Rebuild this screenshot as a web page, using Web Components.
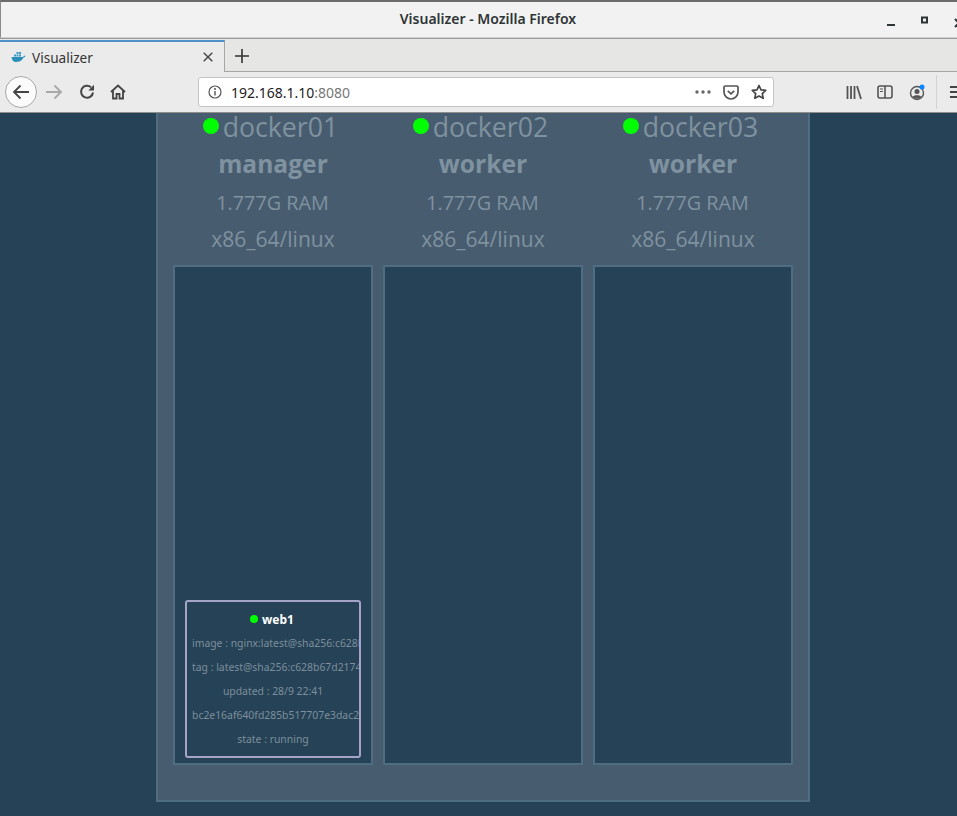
<!DOCTYPE html>
<html>
<head>
<meta charset="utf-8">
<title>Visualizer</title>
<style>
  html, body { margin: 0; padding: 0; height: 816px; overflow: hidden; background: #254256; }
  body { display: flex; flex-direction: column; font-family: "Open Sans", "Noto Sans", sans-serif; }
</style>
</head>
<body>
<fx-chrome></fx-chrome>
<swarm-page>
  <swarm-node name="docker01" role="manager">
    <swarm-task name="web1">
      <div>image : nginx:latest@sha256:c628b67d21744fce822</div>
      <div>tag : latest@sha256:c628b67d21744fce822</div>
      <div class="c">updated : 28/9 22:41</div>
      <div>bc2e16af640fd285b517707e3dac2dc</div>
      <div class="c">state : running</div>
    </swarm-task>
  </swarm-node>
  <swarm-node name="docker02" role="worker"></swarm-node>
  <swarm-node name="docker03" role="worker"></swarm-node>
</swarm-page>
<script>
class FxChrome extends HTMLElement {
    constructor() {
        super();
        this.attachShadow({ mode: "open" });
        this.shadowRoot.innerHTML = `
        <style>
            :host { display: block; height: 113px; flex: none; color: #333; font-family: "Noto Sans", sans-serif; overflow: hidden; }
            svg { display: block; flex: none; }
            .title {
                height: 38px; box-sizing: border-box; background: #f2f2f2;
                border-top: 2px solid #6b6b6b; border-left: 1px solid #8a8a8a; border-bottom: 1px solid #d0d0d0;
                display: flex; align-items: center; justify-content: center; position: relative;
                font-size: 14px; font-weight: 600; color: #2e3436; padding-bottom: 2px; padding-left: 18px;
            }
            .winbtns { position: absolute; top: 0; left: 885px; display: flex; }
            .tabs {
                height: 34px; box-sizing: border-box; background: #e6e6e5;
                border-top: 1px solid #9a9a9a; padding-top: 1px; display: flex;
            }
            .tab {
                width: 225px; height: 32px; box-sizing: border-box; background: #ebebeb;
                border-top: 2px solid #4f8fcb; border-right: 1px solid #a6a6a6;
                display: flex; align-items: center; padding-left: 11px; font-size: 13.6px; color: #333;
            }
            .tab span { margin-left: 6px; flex: 1; }
            .tab .x { margin-right: 11px; }
            .rest { flex: 1; display: flex; border-bottom: 1px solid #a6a6a6; }
            .plus { width: 34px; display: flex; align-items: center; justify-content: center; }
            .nav {
                height: 41px; box-sizing: border-box; background: #ebebeb; border-bottom: 1px solid #8e8e8e;
                display: flex; align-items: center; position: relative; padding-left: 5px;
            }
            .back {
                flex: none; width: 32px; height: 32px; box-sizing: border-box; border: 1px solid #a8a8a8; border-radius: 50%;
                background: #fbfbfb; display: flex; align-items: center; justify-content: center;
            }
            .url {
                flex: none; width: 576px; height: 30px; box-sizing: border-box; margin-left: 72px; background: #fff;
                border: 1px solid #c4c4c4; border-radius: 3px; display: flex; align-items: center;
                padding-left: 9px; font-size: 14px; color: #222;
            }
            .url b { font-weight: 400; margin-left: 9px; flex: 1; }
            .url i { font-style: normal; color: #777; }
            .right { flex: none; display: flex; align-items: center; margin-left: 72px; }
            .sep { width: 1px; height: 34px; background: #d2d2d2; margin-left: 10px; }
        </style>
        <div class="title">Visualizer - Mozilla Firefox
            <div class="winbtns">
                <svg width="72" height="37" viewBox="0 0 72 37">
                    <rect x="1" y="22" width="8" height="2" fill="#2e3436"/>
                    <rect x="36" y="15.500" width="5" height="5" fill="none" stroke="#2e3436" stroke-width="2"/>
                    <path d="M69 17l8 8m0-8l-8 8" stroke="#2e3436" stroke-width="2"/>
                </svg>
            </div>
        </div>
        <div class="tabs">
            <div class="tab">
                <svg width="15" height="12" viewBox="0 0 15 12">
                    <path d="M0.500 6h11.500c.5-1 1.500-1.400 2.500-1.200-.3 1-1 1.600-2 1.800C11 10 8 11 5 11 2.500 11 .8 9 .5 6z" fill="#2a8fb8"/>
                    <path d="M3 3.500h2v2H3zM5.500 3.500h2v2h-2zM8 3.500h2v2H8zM5.500 1h2v2h-2zM8 1h2v2H8z" fill="#3d9cc4"/>
                </svg>
                <span>Visualizer</span>
                <svg class="x" width="10" height="10" viewBox="0 0 10 10"><path d="M.7.7l8.600 8.600m0-8.600L.7 9.300" stroke="#444" stroke-width="1.400"/></svg>
            </div>
            <div class="rest">
                <div class="plus">
                    <svg width="14" height="14" viewBox="0 0 14 14"><path d="M7 0v14M0 7h14" stroke="#333" stroke-width="1.600"/></svg>
                </div>
            </div>
        </div>
        <div class="nav">
            <div class="back">
                <svg width="18" height="16" viewBox="0 0 18 16"><path d="M17 8H2M8.500 1.500L2 8l6.500 6.500" fill="none" stroke="#444" stroke-width="1.800"/></svg>
            </div>
            <svg style="margin-left:8px" width="18" height="16" viewBox="0 0 18 16"><path d="M1 8h15M9.500 1.500L16 8l-6.500 6.500" fill="none" stroke="#a8a8a8" stroke-width="1.800"/></svg>
            <svg style="margin-left:16px" width="16" height="16" viewBox="0 0 16 16"><path d="M14 8.500A6 6 0 1 1 12 3.200" fill="none" stroke="#444" stroke-width="2"/><path d="M15 .8V6.500H9.300z" fill="#444"/></svg>
            <svg style="margin-left:15px" width="16" height="16" viewBox="0 0 16 16"><path d="M1 8l7-6.500L15 8M3 6.800V14.500h3.500V10h3v4.500H13V6.800" fill="none" stroke="#444" stroke-width="1.800"/></svg>
            <div class="url">
                <svg width="14" height="14" viewBox="0 0 14 14"><circle cx="7" cy="7" r="6" fill="none" stroke="#555" stroke-width="1.200"/><path d="M7 6v4.500" stroke="#555" stroke-width="1.400"/><circle cx="7" cy="4" r="1" fill="#555"/></svg>
                <b>192.168.1.10<i>:8080</i></b>
                <svg width="16" height="4" viewBox="0 0 16 4" style="margin-right:12px"><circle cx="2" cy="2" r="1.700" fill="#666"/><circle cx="8" cy="2" r="1.700" fill="#666"/><circle cx="14" cy="2" r="1.700" fill="#666"/></svg>
                <svg width="16" height="15" viewBox="0 0 16 15" style="margin-right:12px"><path d="M2.200 1h11.600c.7 0 1.200.5 1.200 1.200V7a7 7 0 0 1-14 0V2.200C1 1.500 1.500 1 2.200 1z" fill="none" stroke="#555" stroke-width="1.700"/><path d="M4.800 5.800L8 8.800l3.200-3" fill="none" stroke="#555" stroke-width="1.800"/></svg>
                <svg width="16" height="16" viewBox="0 0 16 16" style="margin-right:6px"><path d="M8 1.500l2 4.300 4.700.6-3.400 3.200.9 4.700L8 12l-4.200 2.300.9-4.700L1.300 6.400 6 5.800z" fill="none" stroke="#444" stroke-width="1.700" stroke-linejoin="round"/></svg>
            </div>
            <div class="right">
                <svg width="16" height="15" viewBox="0 0 16 15"><path d="M1.500 1v13M5 1v13M8.500 1v13M11 1l4 13" stroke="#555" stroke-width="1.800"/></svg>
                <svg style="margin-left:15px" width="16" height="14" viewBox="0 0 16 14"><rect x="1" y="1" width="14" height="12" rx="2" fill="none" stroke="#555" stroke-width="1.600"/><path d="M8 1v12" stroke="#555" stroke-width="1.600"/><path d="M3 4h3M3 6.500h3" stroke="#555" stroke-width="1.200"/></svg>
                <svg style="margin-left:16px" width="17" height="18" viewBox="0 0 17 18"><circle cx="8" cy="10" r="6.500" fill="none" stroke="#555" stroke-width="1.400"/><circle cx="8" cy="8.500" r="2.500" fill="#555"/><path d="M3.500 14c1-2.500 8-2.500 9 0a6.500 6.500 0 0 1-9 0z" fill="#555"/><circle cx="13" cy="4" r="2.500" fill="#0a84ff"/></svg>
                <div class="sep"></div>
                <svg style="margin-left:13px" width="16" height="12" viewBox="0 0 16 12"><path d="M0 1h16M0 6h16M0 11h16" stroke="#444" stroke-width="1.800"/></svg>
            </div>
        </div>`;
    }
}

class SwarmPage extends HTMLElement {
    constructor() {
        super();
        this.attachShadow({ mode: "open" });
        this.shadowRoot.innerHTML = `
        <style>
            :host { display: block; flex: 1; background: #254256; overflow: hidden; }
            .panel {
                width: 654px; height: 689px; box-sizing: border-box; margin-left: 156px;
                background: #485c70; border: 2px solid #4f6d81; border-top: 0;
                display: flex; gap: 10px; padding-left: 15px;
            }
        </style>
        <div class="panel"><slot></slot></div>`;
    }
}

class SwarmNode extends HTMLElement {
    constructor() {
        super();
        this.attachShadow({ mode: "open" });
        this.shadowRoot.innerHTML = `
        <style>
            :host { display: block; width: 200px; font-family: "Open Sans", sans-serif; color: #7f929f; text-align: center; }
            .name { height: 28px; display: flex; align-items: center; justify-content: center; font-size: 26.7px; margin-top: -1px; padding-right: 5px; white-space: nowrap; }
            .dot { width: 16px; height: 16px; border-radius: 50%; background: #00ff00; margin-right: 4px; flex: none; }
            .role { font-size: 24.6px; font-weight: 700; line-height: 36px; margin-top: 6px; }
            .line { font-size: 19.8px; line-height: 37px; }
            .line.ram { margin-top: 2px; padding-right: 1px; }
            .line.os { font-size: 21px; line-height: 36px; }
            .body {
                width: 200px; height: 500px; box-sizing: border-box; margin-top: 8px;
                background: #254256; border: 2px solid #4f6d81;
                display: flex; flex-direction: column; justify-content: flex-end; align-items: center; padding-bottom: 5px;
            }
        </style>
        <div class="name"><span class="dot"></span><span class="n"></span></div>
        <div class="role"></div>
        <div class="line ram">1.777G RAM</div>
        <div class="line os">x86_64/linux</div>
        <div class="body"><slot></slot></div>`;
        this.shadowRoot.querySelector(".n").textContent = this.getAttribute("name");
        this.shadowRoot.querySelector(".role").textContent = this.getAttribute("role");
    }
}

class SwarmTask extends HTMLElement {
    constructor() {
        super();
        this.attachShadow({ mode: "open" });
        this.shadowRoot.innerHTML = `
        <style>
            :host {
                display: block; width: 176px; height: 158px; box-sizing: border-box;
                border: 2px solid #a5a3c7; border-radius: 3px; background: #254256;
                font-family: "Noto Sans", "DejaVu Sans", sans-serif; overflow: hidden;
            }
            .head {
                display: flex; align-items: center; justify-content: center;
                height: 14px; margin-top: 10px; margin-bottom: 5px; padding-right: 2px; color: #fff; font-size: 12px; font-weight: 700;
            }
            .dot { width: 8px; height: 8px; border-radius: 50%; background: #00ff00; margin-right: 4px; }
            ::slotted(div) {
                font-size: 10.4px; line-height: 24px; height: 24px; color: #7d8f9c;
                white-space: nowrap; overflow: hidden; padding-left: 5px;
            }
            ::slotted(.c) { text-align: center; padding-left: 0; }
        </style>
        <div class="head"><span class="dot"></span><span class="n"></span></div>
        <slot></slot>`;
        this.shadowRoot.querySelector(".n").textContent = this.getAttribute("name");
    }
}

window.customElements.define('fx-chrome', FxChrome);
window.customElements.define('swarm-page', SwarmPage);
window.customElements.define('swarm-node', SwarmNode);
window.customElements.define('swarm-task', SwarmTask);
</script>
</body>
</html>
